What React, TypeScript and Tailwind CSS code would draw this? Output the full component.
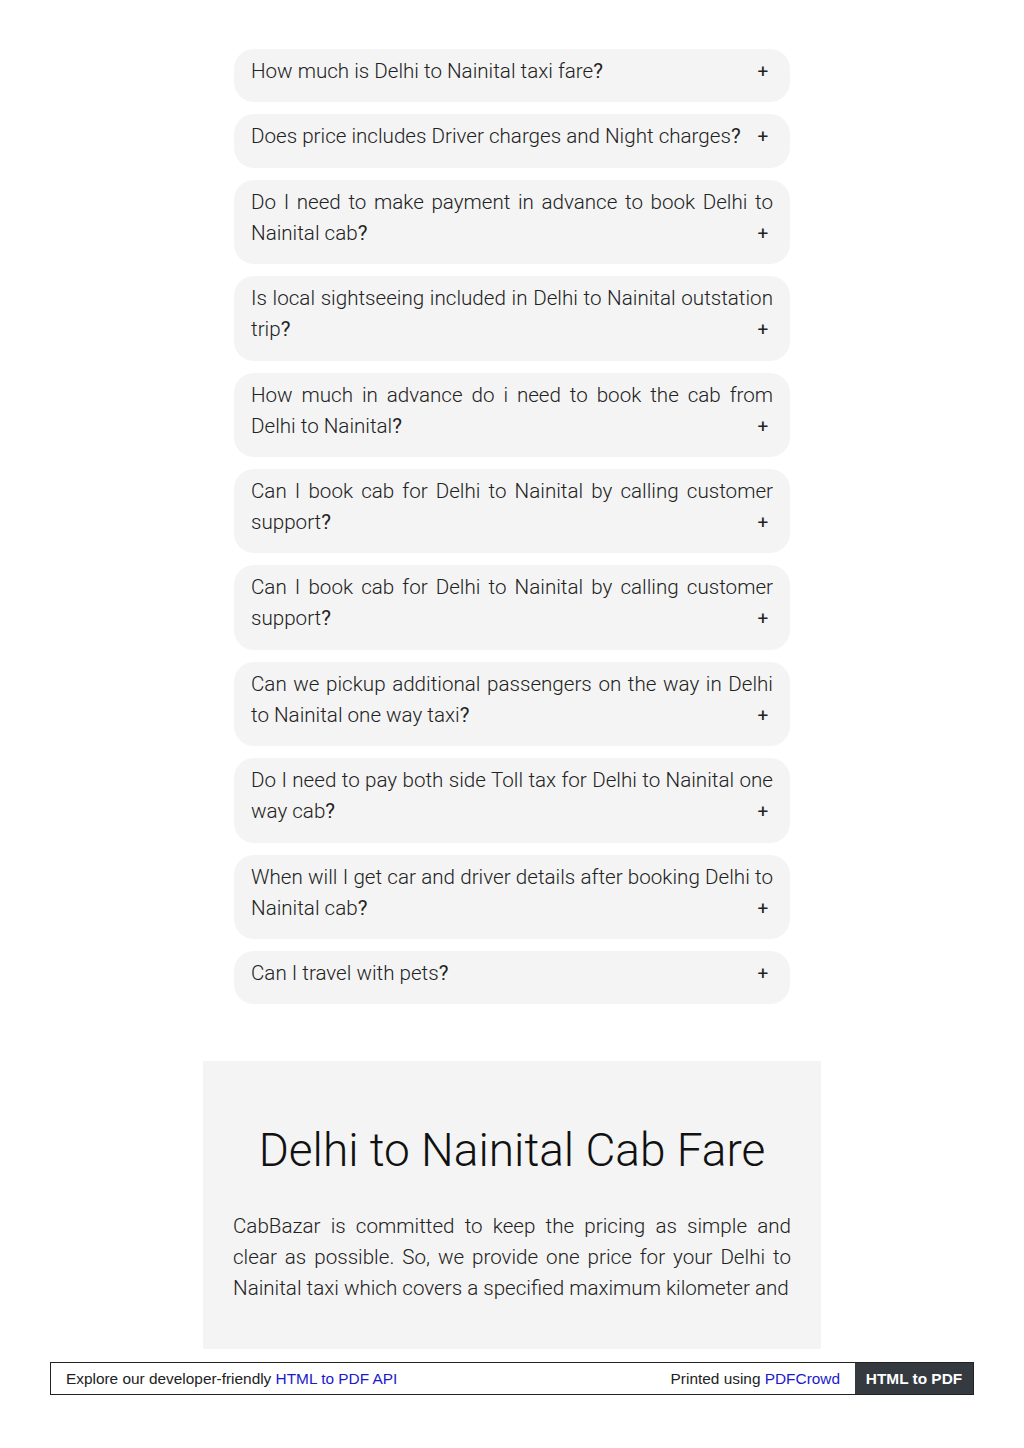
const FAQS = [
  "How much is Delhi to Nainital taxi fare",
  "Does price includes Driver charges and Night charges",
  "Do I need to make payment in advance to book Delhi to Nainital cab",
  "Is local sightseeing included in Delhi to Nainital outstation trip",
  "How much in advance do i need to book the cab from Delhi to Nainital",
  "Can I book cab for Delhi to Nainital by calling customer support",
  "Can I book cab for Delhi to Nainital by calling customer support",
  "Can we pickup additional passengers on the way in Delhi to Nainital one way taxi",
  "Do I need to pay both side Toll tax for Delhi to Nainital one way cab",
  "When will I get car and driver details after booking Delhi to Nainital cab",
  "Can I travel with pets",
];

export default function App() {
  return (
    <div className="w-[1024px] h-[1448px] bg-white overflow-hidden font-['Roboto',sans-serif] text-[#222]">
      {/* FAQ list */}
      <div className="w-[556px] mx-auto pt-[49px] flex flex-col gap-[12px]">
        {FAQS.map((q, i) => (
          <div key={i} className="bg-[#f4f4f4] rounded-[20px] px-[17px] pt-[7px] pb-[15.4px]">
            <p className="text-[20.6px] leading-[31px] font-light text-justify">
              {q}
              <span className="font-normal">?</span>
              <span className="float-right w-[20px] text-center text-[19px] font-normal">+</span>
            </p>
          </div>
        ))}
      </div>

      {/* Fare section */}
      <div className="w-[618px] h-[288px] mx-auto mt-[57px] bg-[#f4f4f4] px-[30px] pt-[62px] overflow-hidden">
        <h2 className="text-[46px] leading-[54px] font-light text-center text-[#111]">
          Delhi to Nainital Cab Fare
        </h2>
        <p className="mt-[34px] text-[20.6px] leading-[31px] font-light text-justify">
          CabBazar is committed to keep the pricing as simple and clear as possible. So, we provide one price for your Delhi to Nainital taxi which covers a specified maximum kilometer and
        </p>
      </div>

      {/* PDF footer */}
      <div className="mt-[13px] ml-[50px] w-[924px] h-[33px] border border-[#222] flex items-stretch font-['Liberation_Sans',Arial,sans-serif] text-[15.4px]">
        <div className="flex-1 flex items-center pl-[15px] text-[#222]">
          Explore our developer-friendly&nbsp;<span className="text-[#1a1acc]">HTML to PDF API</span>
        </div>
        <div className="flex items-center pr-[15px] text-[#222]">
          Printed using&nbsp;<span className="text-[#1a1acc]">PDFCrowd</span>
        </div>
        <div className="w-[118px] bg-[#343a40] text-white font-bold flex items-center justify-center">
          HTML to PDF
        </div>
      </div>
    </div>
  );
}
